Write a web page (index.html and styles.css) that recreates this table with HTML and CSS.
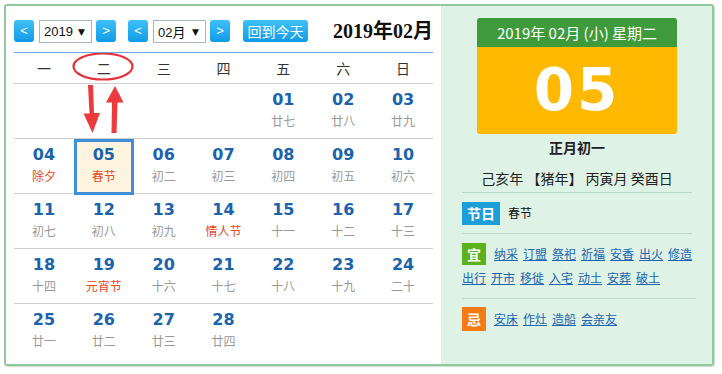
FILE: index.html
```html
<!DOCTYPE html>
<html lang="zh">
<head>
<meta charset="utf-8">
<title>万年历</title>
<link rel="stylesheet" href="styles.css">
</head>
<body>
<div class="frame">
  <div class="left">
    <div class="toolbar">
      <span class="nav">&lt;</span>
      <span class="sel sel-year"><span>2019</span><span class="caret">▼</span></span>
      <span class="nav nav-gap">&gt;</span>
      <span class="nav">&lt;</span>
      <span class="sel sel-month"><span>02月</span><span class="caret">▼</span></span>
      <span class="nav nav-gap2">&gt;</span>
      <span class="today-btn">回到今天</span>
      <span class="title">2019年02月</span>
    </div>
    <div class="cal">
      <svg class="annot" width="419" height="100" viewBox="0 0 419 100">
        <ellipse cx="89" cy="13.5" rx="29.5" ry="13" fill="none" stroke="#e5323a" stroke-width="2.2"/>
        <polygon points="74,32 79,32 80,60 86,60 78.5,80 69.5,60.5 75.5,60.5" fill="#ec3a3f"/>
        <polygon points="101,33 109.5,49.5 103.5,49.5 102.5,80 97.5,80 98,49.5 92,49.5" fill="#ec3a3f"/>
      </svg>
      <div class="weekdays">
        <span>一</span><span>二</span><span>三</span><span>四</span><span>五</span><span>六</span><span>日</span>
      </div>
      <div class="week">
        <div class="day"></div><div class="day"></div><div class="day"></div><div class="day"></div>
        <div class="day"><b>01</b><i>廿七</i></div>
        <div class="day"><b>02</b><i>廿八</i></div>
        <div class="day"><b>03</b><i>廿九</i></div>
      </div>
      <div class="week">
        <div class="day"><b>04</b><i class="fest">除夕</i></div>
        <div class="day today"><b>05</b><i class="fest">春节</i></div>
        <div class="day"><b>06</b><i>初二</i></div>
        <div class="day"><b>07</b><i>初三</i></div>
        <div class="day"><b>08</b><i>初四</i></div>
        <div class="day"><b>09</b><i>初五</i></div>
        <div class="day"><b>10</b><i>初六</i></div>
      </div>
      <div class="week">
        <div class="day"><b>11</b><i>初七</i></div>
        <div class="day"><b>12</b><i>初八</i></div>
        <div class="day"><b>13</b><i>初九</i></div>
        <div class="day"><b>14</b><i class="fest">情人节</i></div>
        <div class="day"><b>15</b><i>十一</i></div>
        <div class="day"><b>16</b><i>十二</i></div>
        <div class="day"><b>17</b><i>十三</i></div>
      </div>
      <div class="week">
        <div class="day"><b>18</b><i>十四</i></div>
        <div class="day"><b>19</b><i class="fest">元宵节</i></div>
        <div class="day"><b>20</b><i>十六</i></div>
        <div class="day"><b>21</b><i>十七</i></div>
        <div class="day"><b>22</b><i>十八</i></div>
        <div class="day"><b>23</b><i>十九</i></div>
        <div class="day"><b>24</b><i>二十</i></div>
      </div>
      <div class="week last">
        <div class="day"><b>25</b><i>廿一</i></div>
        <div class="day"><b>26</b><i>廿二</i></div>
        <div class="day"><b>27</b><i>廿三</i></div>
        <div class="day"><b>28</b><i>廿四</i></div>
        <div class="day"></div><div class="day"></div><div class="day"></div>
      </div>
    </div>
  </div>
  <div class="right">
    <div class="card">
      <div class="card-head">2019年 02月 (小) 星期二</div>
      <div class="card-day">05</div>
    </div>
    <div class="info">
      <div class="lunar">正月初一</div>
      <div class="ganzhi">己亥年 【猪年】 丙寅月 癸酉日</div>
    </div>
    <div class="sect fest-sect">
      <span class="badge badge-fest">节日</span><span class="plain">春节</span>
    </div>
    <div class="sect yi-sect">
      <span class="badge badge-yi">宜</span><a href="#">纳采</a><a href="#">订盟</a><a href="#">祭祀</a><a href="#">祈福</a><a href="#">安香</a><a href="#">出火</a><a href="#">修造</a><a href="#">出行</a><a href="#">开市</a><a href="#">移徙</a><a href="#">入宅</a><a href="#">动土</a><a href="#">安葬</a><a href="#">破土</a>
    </div>
    <div class="sect ji-sect">
      <span class="badge badge-ji">忌</span><a href="#">安床</a><a href="#">作灶</a><a href="#">造船</a><a href="#">会亲友</a>
    </div>
  </div>
</div>
</body>
</html>
```

FILE: styles.css
```css
* { box-sizing: border-box; }
html, body { margin: 0; padding: 0; background: #fff; }
body {
  font-family: "Noto Sans CJK SC", "Noto Sans", sans-serif;
  color: #333;
}
.frame {
  margin: 4px;
  width: 710px;
  height: 362px;
  border: 2px solid #92c8a0;
  border-radius: 3px;
  display: flex;
  box-shadow: 1px 1px 1px rgba(120, 170, 130, 0.4);
}
.left {
  width: 435px;
  background: #fff;
  padding: 14px 8px 0 8px;
}
.toolbar {
  display: flex;
  align-items: flex-start;
  height: 23px;
}
.nav {
  width: 20px;
  height: 22px;
  border-radius: 3px;
  background: linear-gradient(#3fc1f8, #119be7);
  color: #fff;
  font-family: "Liberation Sans", Arial, sans-serif;
  font-size: 13px;
  line-height: 21px;
  text-align: center;
  margin-right: 5px;
}
.nav-gap { margin-left: 4px; margin-right: 12px; }
.nav-gap2 { margin-left: 4px; margin-right: 13px; }
.sel {
  height: 23px;
  border: 1px solid #aab5c2;
  background: #fff;
  display: flex;
  align-items: center;
  justify-content: space-between;
  padding: 0 6px 0 4px;
  font-family: "Liberation Sans", "Noto Sans CJK SC", sans-serif;
  font-size: 13px;
  color: #111;
}
.sel-year { width: 53px; }
.sel-month { width: 53px; }
.caret {
  font-family: "DejaVu Sans", sans-serif;
  font-size: 9px;
  color: #111;
}
.today-btn {
  width: 65px;
  height: 22px;
  border-radius: 3px;
  background: linear-gradient(#3fc1f8, #119be7);
  color: #fff;
  font-size: 14px;
  line-height: 22px;
  text-align: center;
}
.title {
  margin-left: auto;
  font-family: "Liberation Serif", "Noto Sans CJK SC", serif;
  font-weight: bold;
  font-size: 20px;
  line-height: 23px;
  color: #111;
}
.cal {
  position: relative;
  width: 419px;
  margin-top: 9px;
  border-top: 1px solid #6da6dd;
}
.annot {
  position: absolute;
  left: 0;
  top: 0;
  pointer-events: none;
  z-index: 2;
}
.weekdays {
  display: grid;
  grid-template-columns: repeat(7, 1fr);
  height: 31px;
  border-bottom: 1px solid #cfcfcf;
  align-items: center;
  text-align: center;
  font-size: 14px;
  color: #333;
}
.week {
  display: grid;
  grid-template-columns: repeat(7, 1fr);
  height: 55px;
  border-bottom: 1px solid #cfcfcf;
}
.week.last { border-bottom: none; }
.day {
  display: flex;
  flex-direction: column;
  align-items: center;
  padding-top: 6px;
}
.day b {
  font-family: "DejaVu Sans", Verdana, sans-serif;
  font-weight: bold;
  font-size: 16px;
  line-height: 20px;
  color: #1b63ab;
}
.day i {
  font-style: normal;
  font-size: 12px;
  line-height: 18px;
  margin-top: 2px;
  color: #999;
}
.day i.fest { color: #e2492a; }
.day.today {
  border: 3px solid #3f8ed8;
  background: #fff4df;
  padding-top: 3px;
  height: 56px;
}
.right {
  width: 271px;
  background: #dff2e6;
  padding: 12px 20px 0 21px;
}
.card {
  width: 200px;
  margin: 0 auto;
  border-radius: 3px;
  overflow: hidden;
}
.card-head {
  height: 29px;
  background: #3f9a3b;
  color: #fff;
  font-size: 15px;
  line-height: 29px;
  text-align: center;
}
.card-day {
  height: 87px;
  background: #ffb900;
  color: #fff;
  font-family: "DejaVu Sans", Verdana, sans-serif;
  font-weight: bold;
  font-size: 58px;
  letter-spacing: 3px;
  line-height: 87px;
  text-align: center;
}
.info {
  text-align: center;
  border-bottom: 1px solid #b5d9c2;
  padding-bottom: 4px;
}
.lunar {
  margin-top: 3px;
  font-weight: bold;
  font-size: 14px;
  line-height: 20px;
  color: #222;
}
.ganzhi {
  margin-top: 11px;
  font-size: 14px;
  line-height: 20px;
  color: #222;
}
.sect {
  display: flex;
  flex-wrap: wrap;
  align-items: center;
  column-gap: 5px;
  padding: 8px 0;
  margin-right: -4px;
  border-bottom: 1px solid #b5d9c2;
  font-size: 12px;
  line-height: 24px;
}
.sect.ji-sect { border-bottom: none; margin-right: 0; }
.fest-sect { margin-right: 0; }
.badge {
  display: inline-block;
  color: #fff;
  font-weight: bold;
  font-size: 14px;
  text-align: center;
  margin-right: 3px;
}
.badge-fest {
  width: 38px;
  height: 23px;
  line-height: 23px;
  background: #1e9ed6;
}
.badge-yi {
  width: 24px;
  height: 22px;
  line-height: 22px;
  background: #5cb21c;
}
.badge-ji {
  width: 24px;
  height: 24px;
  line-height: 24px;
  background: #f57b15;
}
.plain { color: #111; }
.sect a {
  color: #1c64ad;
  text-decoration: underline;
  height: 24px;
}
```
